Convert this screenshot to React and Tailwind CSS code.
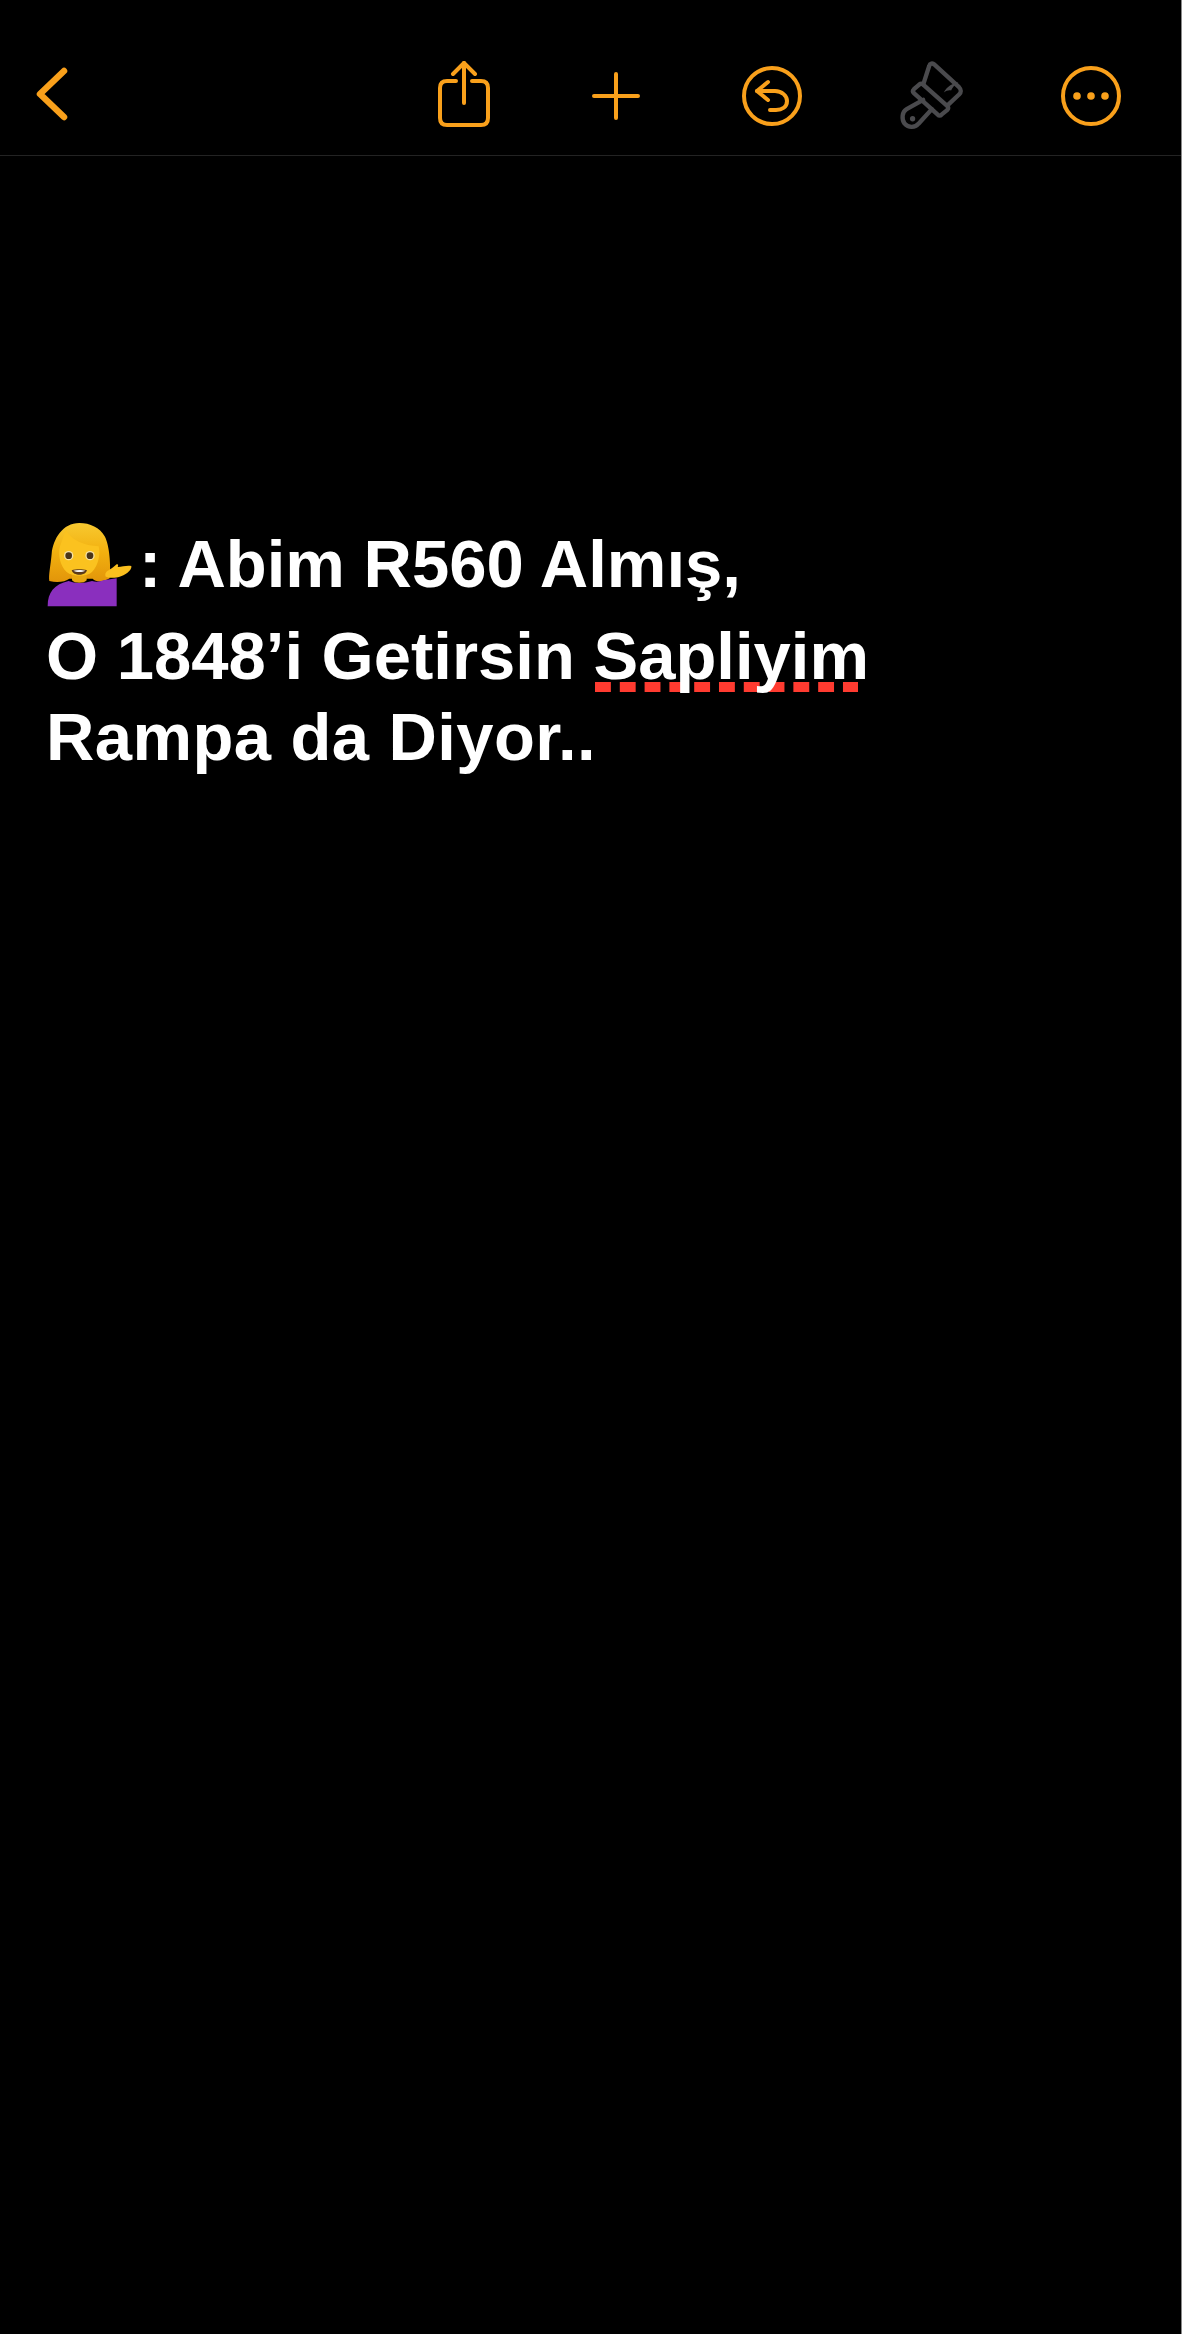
const orange = '#f9a01b'

function BackIcon() {
  return (
    <svg width="34" height="54" viewBox="0 0 34 54" fill="none" stroke={orange} strokeWidth="6.5" strokeLinecap="round" strokeLinejoin="round" className="mb-1">
      <path d="M29 4 L5 27 L29 50" />
    </svg>
  )
}

function ShareIcon() {
  return (
    <svg width="52" height="66" viewBox="0 0 52 66" fill="none" stroke={orange} strokeWidth="4" strokeLinecap="round" strokeLinejoin="round" className="mb-1">
      <path d="M18 20 H9 C4.500 20 2 22.500 2 27 V57 C2 61.500 4.500 64 9 64 H43 C47.500 64 50 61.500 50 57 V27 C50 22.500 47.500 20 43 20 H34" />
      <path d="M26 42 V2" />
      <path d="M15 13 L26 2 L37 13" />
    </svg>
  )
}

function PlusIcon() {
  return (
    <svg width="48" height="48" viewBox="0 0 48 48" fill="none" stroke={orange} strokeWidth="4" strokeLinecap="round">
      <path d="M24 2 V46 M2 24 H46" />
    </svg>
  )
}

function UndoIcon() {
  return (
    <svg width="60" height="60" viewBox="0 0 60 60" fill="none" stroke={orange} strokeWidth="4" strokeLinecap="round" strokeLinejoin="round">
      <circle cx="30" cy="30" r="28" />
      <path d="M26 16 L15 25 L26 34" />
      <path d="M15 25 H33 C40 25 45 30 45 35 C45 41 40 44 34 44 H28" />
    </svg>
  )
}

// coordinates are taken from a 3x crop of the icon, hence the big viewBox
function BrushIcon() {
  return (
    <svg width="67" height="73" viewBox="60 30 200 220" fill="none" stroke="#4a4a4d" strokeWidth="13" strokeLinejoin="round" strokeLinecap="round">
      <path d="M132 104 L150 48 C152 40 160 38 166 44 L240 112 C247 119 247 128 240 134 L206 166" />
      <path d="M104 118 L120 104 C124 101 128 101 132 104 L204 168 C208 172 208 177 204 181 L188 194 C184 198 179 198 175 194 L104 130 C100 126 100 122 104 118 Z" />
      <path d="M132 150 L82 178 C68 186 66 208 76 222 C88 236 108 234 118 222 L158 178" />
      <circle cx="100" cy="207" r="8" fill="#4a4a4d" stroke="none" />
      <path d="M238 96 C222 100 204 108 194 128 C202 122 210 120 216 122 C220 112 228 104 238 96 Z" fill="#4a4a4d" stroke="none" />
    </svg>
  )
}

function MoreIcon() {
  return (
    <svg width="60" height="60" viewBox="0 0 60 60" fill="none" stroke={orange} strokeWidth="4">
      <circle cx="30" cy="30" r="28" />
      <circle cx="16" cy="30" r="3.800" fill={orange} stroke="none" />
      <circle cx="30" cy="30" r="3.800" fill={orange} stroke="none" />
      <circle cx="44" cy="30" r="3.800" fill={orange} stroke="none" />
    </svg>
  )
}

// tipping hand woman emoji, drawn because no colour emoji font is installed
function WomanEmoji() {
  return (
    <svg width="87" height="85" viewBox="50 35 261 255" className="inline-block align-baseline mb-[-20px] mr-[6px]">
      <defs>
        <linearGradient id="hair" x1="0" y1="0" x2="0" y2="1">
          <stop offset="0" stopColor="#f8c930" />
          <stop offset="0.5" stopColor="#f2b00f" />
          <stop offset="1" stopColor="#e2950a" />
        </linearGradient>
      </defs>
      <path d="M150 38 C100 38 72 85 67 130 C64 165 57 195 60 212 C85 218 108 214 120 205 L190 205 C200 216 222 216 241 204 C245 170 241 105 226 78 C212 52 182 38 150 38 Z" fill="url(#hair)" />
      <path d="M55 288 C55 245 75 222 118 212 C135 220 165 220 188 212 C200 216 212 214 222 210 L262 204 L262 288 Z" fill="#8a2fbe" />
      <path d="M128 190 L172 190 L172 210 C165 220 135 220 128 210 Z" fill="#e8a70f" />
      <path d="M110 58 C125 90 165 105 208 108 C214 130 208 165 188 185 C172 200 130 200 112 185 C92 168 85 130 92 108 C98 90 104 72 110 58 Z" fill="#fbc21f" />
      <circle cx="118" cy="136" r="14" fill="#f7e2a6" />
      <circle cx="182" cy="136" r="14" fill="#f7e2a6" />
      <circle cx="118" cy="136" r="10" fill="#4a3418" />
      <circle cx="182" cy="136" r="10" fill="#4a3418" />
      <path d="M127 180 C140 176 160 176 173 180 C168 198 132 198 127 180 Z" fill="#5b3a1a" />
      <path d="M132 181 C142 178 158 178 168 181 C160 186 140 186 132 181 Z" fill="#f5f5f5" />
      <path d="M228 190 C232 180 248 176 262 162 C266 160 268 164 265 170 C280 168 296 164 306 167 C308 176 296 190 275 198 C258 204 238 204 228 198 Z" fill="#fbbf1e" />
    </svg>
  )
}

export default function App() {
  return (
    <div className="min-h-[2334px] border-r border-[#8a8a8a] bg-black font-['Liberation_Sans',Arial,sans-serif] font-bold text-white">
      <div className="flex h-[156px] items-center border-b border-[#232323] pr-[60px] pl-[35px] pt-[37px]">
        <BackIcon />
        <div className="ml-auto flex items-center">
          <ShareIcon />
          <div className="ml-[102px]"><PlusIcon /></div>
          <div className="ml-[102px]"><UndoIcon /></div>
          <div className="ml-[97px]"><BrushIcon /></div>
          <div className="ml-[95px]"><MoreIcon /></div>
        </div>
      </div>

      <div className="isolate pl-[46px] pt-[366px] text-[67px] leading-[81px]">
        <div className="h-[93px] whitespace-nowrap"><WomanEmoji />: Abim R560 Almış,</div>
        <div className="whitespace-nowrap">
          O 1848’i Getirsin{' '}
          <span className="relative">
            <span className="absolute bottom-[1px] left-[2px] -z-10 h-[10px] w-[263px] bg-[linear-gradient(90deg,#ff3b30_16px,transparent_16px)] bg-[length:24.8px_10px] bg-repeat-x" />
            Sapliyim
          </span>
        </div>
        <div className="whitespace-nowrap tracking-[0.4px]">Rampa da Diyor..</div>
      </div>
    </div>
  )
}
